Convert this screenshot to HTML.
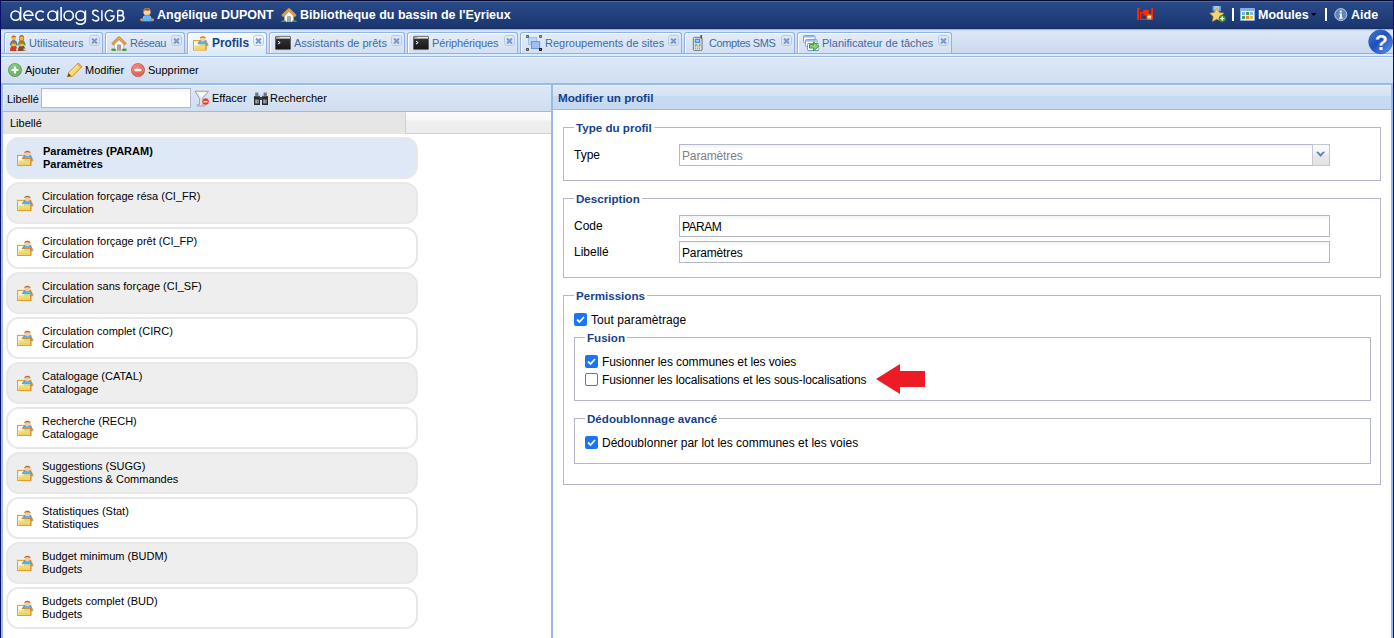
<!DOCTYPE html>
<html><head><meta charset="utf-8">
<style>
*{box-sizing:border-box}
html,body{margin:0;padding:0}
body{width:1394px;height:638px;overflow:hidden;position:relative;background:#fff;font-family:"Liberation Sans",sans-serif;font-size:11px;color:#000}
.a{position:absolute}
.t{position:absolute;white-space:nowrap;line-height:1}
/* header */
#hdr{left:0;top:0;width:1394px;height:29px;background:linear-gradient(#294b8a,#1b356e);border-top:1px solid #06082e}
#hdr .hl{left:0;top:0;width:1394px;height:1px;background:#4a6cac}
.ht{color:#fff;font-weight:bold;font-size:12.5px}
/* tab strip */
#strip{left:0;top:29px;width:1394px;height:24px;background:linear-gradient(#9ab9e6 0,#9ab9e6 1px,#c6d8f1 1px,#c6d8f1 2px,#dde7f5 2px,#cbd9ef 100%)}
.tab{position:absolute;top:32px;height:21px;border:1px solid #8db2e3;border-bottom:0;border-radius:3px 3px 0 0;background:linear-gradient(#e4ecf7,#d3e0f2);box-shadow:inset 1px 1px 0 #fff}
.tab.act{height:22px;z-index:2;background:linear-gradient(#fafcfe,#deeafa)}
.tab .tx{position:absolute;left:24px;top:5px;color:#416aa3;font-size:11px;white-space:nowrap;line-height:1}
.tab.act .tx{color:#15428b;font-weight:bold}
.tab .ic{position:absolute;left:5px;top:2px;width:16px;height:16px}
.cls{position:absolute;right:2px;top:2px;width:11px;height:11px;border:1px solid #b4caec;border-radius:3px}
.cls:before,.cls:after{content:"";position:absolute;left:1px;top:3.8px;width:7px;height:2px;background:#7b98cb;transform:rotate(45deg)}
.cls:after{transform:rotate(-45deg)}
/* toolbar */
.tb{background:linear-gradient(#dde8f6,#d0def1)}
.tbt{font-size:11px;color:#000}
/* fieldset */
.fs{position:absolute;border:1px solid #b5b8c8}
.lg{position:absolute;background:#fff;color:#15428b;font-weight:bold;font-size:11.6px;padding:0 2px;line-height:1;white-space:nowrap}
.lbl{position:absolute;font-size:12px;white-space:nowrap;line-height:1;color:#000}
.inp{position:absolute;border:1px solid #b5b8c8;background:linear-gradient(#f0f2f4 0,#fff 4px,#fff)}
.inp span{position:absolute;left:2px;top:5px;font-size:12px;line-height:1;white-space:nowrap}
.cb{position:absolute;width:13px;height:13px;border-radius:2px;background:#1775f6}
.cb svg{position:absolute;left:0;top:0}
.cbu{position:absolute;width:13px;height:13px;border-radius:2px;border:1px solid #767676;background:#fff}
/* list */
.row{position:absolute;left:6px;width:412px;height:42px;border:2px solid #e8e8e8;border-radius:13px}
.row .t1{position:absolute;left:34px;top:7px;font-size:11px;line-height:1;white-space:nowrap}
.row .t2{position:absolute;left:34px;top:20px;font-size:11px;line-height:1;white-space:nowrap}
.row svg.ri{position:absolute;left:9px;top:11px}
.row.sel{background:#dfe8f6}.row.sel .t1,.row.sel .t2{font-weight:bold;left:35px}
.row.g{background:#eeeeee}.row.w{background:#fff}
</style></head><body>

<!-- outer frame -->
<div class="a" id="hdr"><div class="a hl"></div></div>
<div class="a" style="left:0;top:28px;width:1394px;height:1px;background:#142c5c"></div>
<div class="a" style="left:0;top:0;width:1px;height:638px;background:#0b0d6b;z-index:50"></div>
<div class="a" style="left:1393px;top:0;width:1px;height:638px;background:#0b0d6b;z-index:50"></div>

<!-- logo -->
<svg class="a" style="left:0;top:0" width="130" height="29" viewBox="0 0 130 29">
  <g fill="none" stroke="#fff" stroke-width="1.6">
    <circle cx="15.6" cy="15.65" r="4.6"/><line x1="20.6" y1="7" x2="20.6" y2="21"/>
    <path d="M23.6 15.3H33A4.6 4.6 0 1 0 31.6 19"/>
    <path d="M43.7 12.4A4.6 4.6 0 1 0 43.7 18.9"/>
    <circle cx="52.5" cy="15.65" r="4.6"/><line x1="57.5" y1="10.4" x2="57.5" y2="21"/>
    <line x1="61.1" y1="7" x2="61.1" y2="21"/>
    <circle cx="68.7" cy="15.65" r="4.6"/>
    <circle cx="80.5" cy="15.65" r="4.6"/><path d="M85.4 10.4V19.8C85.4 25.2 78.2 25.2 76 22.3"/>
  </g>
  <g fill="none" stroke="#fff" stroke-width="1.45">
    <path d="M98.3 11.9C97.7 10.8 96.7 10.3 95.5 10.3C93.8 10.3 92.7 11.3 92.7 12.8C92.7 16.3 98.7 15 98.7 18.4C98.7 20 97.4 20.9 95.6 20.9C94.2 20.9 93 20.3 92.3 19.1"/>
    <path d="M101.9 10.2V21"/>
    <path d="M113 11.8A4.5 5.3 0 1 0 113.9 17.6V15.9H110.4"/>
    <path d="M117.7 10.4V20.9H121C122.9 20.9 123.9 19.8 123.9 18.1C123.9 16.5 122.9 15.5 121 15.5H117.7M117.7 10.4H120.6C122.3 10.4 123.2 11.4 123.2 12.9C123.2 14.4 122.3 15.5 120.6 15.5"/>
  </g>
</svg>

<!-- header user -->
<svg class="a" style="left:139px;top:6px" width="16" height="16" viewBox="0 0 16 16">
  <path d="M5 9.6L6.3 8.9H9.9L11.2 9.6L13 15.6H3.2z" fill="#5cb6fb" stroke="#1f5fd0" stroke-width=".7" stroke-linejoin="round"/>
  <path d="M5.2 10L3.8 13M11 10l1.4 3" stroke="#d8ecff" stroke-width=".7"/>
  <circle cx="2.6" cy="13.8" r="1.4" fill="#f29a30"/><circle cx="13.6" cy="13.8" r="1.4" fill="#f29a30"/>
  <circle cx="8" cy="5.8" r="3.7" fill="#f5d2aa"/>
  <path d="M4.1 6.8C3.6 .8 12.4 .8 11.9 6.8C11.5 5.5 11 4.6 10.3 4.3C9 5 7.2 4.6 6 4.2C5 4.6 4.5 5.5 4.1 6.8z" fill="#a0521c"/>
  <path d="M5.5 9.3H10.5" stroke="#c07a3a" stroke-width=".8"/>
</svg>
<div class="t ht" style="left:157px;top:9px">Angélique DUPONT</div>
<svg class="a" style="left:281px;top:6px" width="16" height="16" viewBox="0 0 16 16">
  <g transform="translate(0 0.6)"><path d="M3.4 8.6V15.4H12.6V8.6L8 4.4z" fill="#fbfbfb" stroke="#9a9a9a" stroke-width=".5"/>
  <rect x="6.3" y="9.8" width="3.4" height="5.6" fill="#7a7a7a"/><rect x="6.9" y="10.4" width="2.2" height="5" fill="#a6a6a6"/>
  <path d="M1.3 9.6L8 3.1l6.7 6.5" fill="none" stroke="#cf8e3e" stroke-width="3" stroke-linejoin="round"/>
  <path d="M1.6 9.3L8 3.1l6.4 6.2" fill="none" stroke="#eab96e" stroke-width="1"/>
  <ellipse cx="2.6" cy="14.9" rx="2.5" ry="1.2" fill="#3da32c"/><ellipse cx="13.4" cy="14.9" rx="2.5" ry="1.2" fill="#3da32c"/></g>
</svg>
<div class="t ht" style="left:300px;top:9px">Bibliothèque du bassin de l'Eyrieux</div>

<!-- header right -->
<svg class="a" style="left:1130px;top:0" width="30" height="29" viewBox="0 0 30 29">
  <rect x="7" y="8" width="2" height="12" fill="#f22a08"/><rect x="7.5" y="8" width="2.5" height="1.2" fill="#f22a08"/>
  <rect x="21.2" y="8" width="1.8" height="12" fill="#f22a08"/>
  <rect x="10" y="18.8" width="12" height="1.2" fill="#f22a08"/>
  <rect x="10" y="12" width="1.4" height="8" fill="#f22a08"/><rect x="10" y="12" width="4" height="1.3" fill="#f22a08"/>
  <rect x="13.2" y="9.8" width="5.6" height="5.6" fill="#ff2a00"/>
  <circle cx="19.3" cy="17" r="3" fill="#f26a10"/><rect x="17.6" y="15.8" width="3.4" height="1" fill="#fff"/><rect x="17.6" y="17.4" width="3.4" height="1" fill="#fff"/>
</svg>
<svg class="a" style="left:1209px;top:5px" width="18" height="18" viewBox="0 0 18 18">
  <path d="M3.5 1h8.5v4.5l-4.2 3l-4.3-3z" fill="#6fa0d8"/><path d="M5.2 1h5v3.5l-2.5 1.8l-2.5-1.8z" fill="#a9c8ec"/>
  <path d="M7.8 3.2l2.2 4.3 4.8.7-3.5 3.4.8 4.8-4.3-2.3-4.3 2.3.8-4.8L.8 8.2l4.8-.7z" fill="#f4d670" stroke="#d99a20" stroke-width=".7"/>
  <circle cx="13.3" cy="13.6" r="3.4" fill="#3f9a34" stroke="#2d7a26" stroke-width=".5"/>
  <path d="M13.3 11.6v4M11.3 13.6h4" stroke="#fff" stroke-width="1.4"/>
</svg>
<div class="a" style="left:1232px;top:8px;width:2px;height:13px;background:#fff"></div>
<svg class="a" style="left:1240px;top:8px" width="15" height="13" viewBox="0 0 15 13">
  <rect x="0" y="0" width="15" height="13" rx="1" fill="#8aaee0"/>
  <rect x="1" y="3" width="13" height="9" fill="#fff"/>
  <rect x="2" y="4" width="3" height="3" fill="#6fb0f0"/><rect x="6" y="4" width="3" height="3" fill="#4e9a4a"/><rect x="10" y="4" width="3" height="3" fill="#7ab8f0"/>
  <rect x="2" y="8" width="3" height="3" fill="#4e9a4a"/><rect x="6" y="8" width="3" height="3" fill="#f58030"/><rect x="10" y="8" width="3" height="3" fill="#e6c040"/>
</svg>
<div class="t ht" style="left:1258px;top:9px">Modules</div>
<svg class="a" style="left:1311px;top:13px" width="6" height="4"><path d="M0 0h5.5L2.75 3z" fill="#000"/></svg>
<div class="a" style="left:1325px;top:8px;width:2px;height:13px;background:#fff"></div>
<svg class="a" style="left:1334px;top:8px" width="14" height="14" viewBox="0 0 14 14">
  <circle cx="6.8" cy="6.6" r="6" fill="#5f86bf" stroke="#b9cde8" stroke-width="1"/>
  <circle cx="6.8" cy="3.6" r="1.1" fill="#fff"/><path d="M5.3 5.5h2.5v4.2h1v1.1H5v-1.1h1V6.6h-.7z" fill="#fff"/>
</svg>
<div class="t ht" style="left:1351px;top:9px">Aide</div>

<!-- tab strip -->
<div class="a" id="strip"></div>
<div class="a" style="left:1px;top:53px;width:1392px;height:1px;background:#8db2e3"></div>
<div class="a" style="left:1px;top:54px;width:1392px;height:2px;background:#deebfb"></div>
<div class="a" style="left:1px;top:56px;width:1392px;height:1px;background:#99bbe8"></div>
<div class="a" style="left:1px;top:57px;width:1392px;height:1px;background:#eef3fa;z-index:1"></div>

<div class="tab" style="left:4px;width:99px"><svg class="ic" viewBox="0 0 16 16">
  <path d="M0 10.5c0-4 2-5.5 3.7-5.5s3.8 1.5 3.8 5.5z" fill="#3f7fad"/>
  <path d="M8 10.5c0-4 2-5.5 3.6-5.5s3.9 1.5 3.9 5.5z" fill="#4f9a43"/>
  <circle cx="3.7" cy="2.9" r="2.3" fill="#f7b13c"/><path d="M1.4 2.6c0-2.6 4.6-2.6 4.6 0c-.8-.7-3.8-.7-4.6 0z" fill="#b9551a"/>
  <path d="M9.2 5.5c-.6-4.5 1-5.5 2.4-5.5s3 1 2.4 5.5z" fill="#c3621e"/><circle cx="11.6" cy="3.4" r="2" fill="#f7b13c"/>
  <path d="M0 16c0-4.5 2-5.6 3.7-5.6s3.8 1.1 3.8 5.6z" fill="#d23c2a"/>
  <path d="M8 16c0-4.5 2-5.6 3.6-5.6s3.9 1.1 3.9 5.6z" fill="#7d4c2b"/>
  <circle cx="3.7" cy="9.3" r="2.2" fill="#f9b842"/><path d="M1.5 9c0-2.4 4.4-2.4 4.4 0c-.8-.6-3.6-.6-4.4 0z" fill="#b9551a"/>
  <circle cx="11.6" cy="9.3" r="2.2" fill="#f9b842"/><path d="M9.4 9c0-2.4 4.4-2.4 4.4 0c-.8-.6-3.6-.6-4.4 0z" fill="#9a4a1a"/>
  <rect x="6" y="13.5" width="2" height="2" fill="#f4d0c8"/><rect x="13.5" y="13.5" width="2" height="2" fill="#e8d8c8"/>
</svg><div class="tx">Utilisateurs</div><div class="cls"></div></div>

<div class="tab" style="left:105px;width:80px"><svg class="ic" viewBox="0 0 16 16">
  <g transform="translate(0 -0.2)"><path d="M3.4 8.6V15.4H12.6V8.6L8 4.4z" fill="#fbfbfb" stroke="#9a9a9a" stroke-width=".5"/>
  <rect x="6.3" y="9.8" width="3.4" height="5.6" fill="#7a7a7a"/><rect x="6.9" y="10.4" width="2.2" height="5" fill="#a6a6a6"/>
  <path d="M1.3 9.6L8 3.1l6.7 6.5" fill="none" stroke="#cf8e3e" stroke-width="3" stroke-linejoin="round"/>
  <path d="M1.6 9.3L8 3.1l6.4 6.2" fill="none" stroke="#eab96e" stroke-width="1"/>
  <ellipse cx="2.6" cy="14.9" rx="2.5" ry="1.2" fill="#3da32c"/><ellipse cx="13.4" cy="14.9" rx="2.5" ry="1.2" fill="#3da32c"/></g>
</svg><div class="tx" style="letter-spacing:-0.3px">Réseau</div><div class="cls"></div></div>

<div class="tab act" style="left:187px;width:80px"><svg class="ic" viewBox="0 0 17 16" width="17" height="16"><use href="#pic"/></svg><div class="tx" style="font-size:11.9px;top:5px">Profils</div><div class="cls"></div></div>

<div class="tab" style="left:269px;width:136px"><svg class="ic" viewBox="0 0 16 16">
  <defs><linearGradient id="tg" x1="0" y1="0" x2="0" y2="1"><stop offset="0" stop-color="#3a3a3a"/><stop offset="1" stop-color="#151515"/></linearGradient></defs>
  <rect x="0.3" y="1.2" width="15.4" height="13.4" rx="1.2" fill="url(#tg)" stroke="#6a6a6a" stroke-width=".5"/>
  <rect x="1" y="1.8" width="14" height="1.8" fill="#e6e6e6"/>
  <rect x="1.3" y="2.1" width="1" height="1" fill="#e03020"/><rect x="2.5" y="2.1" width="1" height="1" fill="#40b040"/><rect x="3.7" y="2.1" width="1" height="1" fill="#e0b020"/>
  <path d="M3 6.2l2.2 1.4L3 9" fill="none" stroke="#fff" stroke-width="1"/>
</svg><div class="tx">Assistants de prêts</div><div class="cls"></div></div>

<div class="tab" style="left:407px;width:111px"><svg class="ic" viewBox="0 0 16 16">
  <defs><linearGradient id="tg" x1="0" y1="0" x2="0" y2="1"><stop offset="0" stop-color="#3a3a3a"/><stop offset="1" stop-color="#151515"/></linearGradient></defs>
  <rect x="0.3" y="1.2" width="15.4" height="13.4" rx="1.2" fill="url(#tg)" stroke="#6a6a6a" stroke-width=".5"/>
  <rect x="1" y="1.8" width="14" height="1.8" fill="#e6e6e6"/>
  <rect x="1.3" y="2.1" width="1" height="1" fill="#e03020"/><rect x="2.5" y="2.1" width="1" height="1" fill="#40b040"/><rect x="3.7" y="2.1" width="1" height="1" fill="#e0b020"/>
  <path d="M3 6.2l2.2 1.4L3 9" fill="none" stroke="#fff" stroke-width="1"/>
</svg><div class="tx" style="letter-spacing:-0.12px">Périphériques</div><div class="cls"></div></div>

<div class="tab" style="left:520px;width:162px"><svg class="ic" viewBox="0 0 16 16">
  <rect x="2.6" y="2.5" width="8" height="7" fill="#c0d6f6" stroke="#93b6ee" stroke-width=".8"/>
  <rect x="5.5" y="6.6" width="8.2" height="7" fill="#a2bff0" stroke="#5b8ddf" stroke-width=".9"/>
  <rect x="0" y="0" width="3" height="3" rx=".9" fill="#5a5a5a"/><rect x="13" y="0" width="3" height="3" rx=".9" fill="#5a5a5a"/>
  <rect x="0" y="13" width="3" height="3" rx=".9" fill="#4a4a4a"/><rect x="13" y="13" width="3" height="3" rx=".9" fill="#000"/>
  <rect x="1.1" y="1.1" width=".8" height=".8" fill="#ddd"/><rect x="14.1" y="1.1" width=".8" height=".8" fill="#ddd"/>
  <rect x="1.1" y="14.1" width=".8" height=".8" fill="#ddd"/><rect x="14.1" y="14.1" width=".8" height=".8" fill="#ddd"/>
</svg><div class="tx">Regroupements de sites</div><div class="cls"></div></div>

<div class="tab" style="left:684px;width:111px"><svg class="ic" viewBox="0 0 16 16">
  <rect x="3.3" y="2.3" width="8.8" height="13.3" rx="1.3" fill="#dcdcdc" stroke="#6a6a6a" stroke-width=".9"/>
  <rect x="10.4" y="0" width="1.7" height="3.5" fill="#555"/>
  <rect x="4.9" y="3.8" width="5.3" height="4.3" rx=".6" fill="#2a98f4"/><rect x="6" y="5.2" width="3" height="1.4" fill="#bfe2ff"/>
  <rect x="4.9" y="9.4" width="2.4" height="1.2" fill="#4ab04a"/><rect x="9" y="9.3" width="1.3" height="1.3" fill="#e03a3a"/>
  <rect x="5" y="11.3" width="1" height="1" fill="#999"/><rect x="7" y="11.3" width="1" height="1" fill="#999"/><rect x="9" y="11.3" width="1" height="1" fill="#999"/>
  <rect x="5" y="13.1" width="1" height="1" fill="#999"/><rect x="7" y="13.1" width="1" height="1" fill="#999"/><rect x="9" y="13.1" width="1" height="1" fill="#999"/>
</svg><div class="tx" style="letter-spacing:-0.4px">Comptes SMS</div><div class="cls"></div></div>

<div class="tab" style="left:797px;width:155px"><svg class="ic" viewBox="0 0 16 16">
  <rect x="0.5" y="0.5" width="11.5" height="7" rx=".8" fill="#fff" stroke="#7ea2d8"/><rect x="1" y="1" width="10.5" height="1.6" fill="#9dbbe8"/>
  <rect x="2.5" y="4.5" width="11.5" height="7" rx=".8" fill="#fff" stroke="#7ea2d8"/><rect x="3" y="5" width="10.5" height="1.6" fill="#9dbbe8"/>
  <rect x="4.5" y="8.5" width="11.3" height="7" rx=".8" fill="#fff" stroke="#6f96d2"/>
  <path d="M6.5 9.6h4.2V6.8l5 4.5-5 4.5v-2.8H6.5z" fill="#8fcf70" stroke="#2f8f1f" stroke-width=".9" stroke-linejoin="round"/>
</svg><div class="tx">Planificateur de tâches</div><div class="cls"></div></div>

<!-- help button -->
<svg class="a" style="left:1368px;top:29px;z-index:3" width="26" height="26" viewBox="0 0 26 26">
  <defs><linearGradient id="hg" x1="0" y1="0" x2="1" y2="1"><stop offset="0" stop-color="#3f78dc"/><stop offset=".45" stop-color="#1f50be"/><stop offset="1" stop-color="#5c9cf0"/></linearGradient></defs>
  <circle cx="12.6" cy="12.8" r="11.9" fill="url(#hg)" stroke="#2a55b0" stroke-width=".7"/>
  <text x="13.2" y="20.8" text-anchor="middle" fill="#f4f6fa" font-family="Liberation Sans" font-weight="bold" font-size="21.5">?</text>
</svg>
<div class="a" style="left:1391px;top:57px;width:2px;height:26px;background:#b4cdef"></div>

<!-- main toolbar -->
<div class="a tb" style="left:1px;top:57px;width:1392px;height:26px"></div>
<div class="a" style="left:1px;top:83px;width:1392px;height:2px;background:#99bbe8"></div>
<svg class="a" style="left:8px;top:63px" width="14" height="14" viewBox="0 0 14 14">
  <defs><radialGradient id="gg" cx="45%" cy="40%" r="60%"><stop offset="0" stop-color="#9bd88f"/><stop offset="1" stop-color="#4d9f47"/></radialGradient>
  <radialGradient id="rg" cx="45%" cy="40%" r="60%"><stop offset="0" stop-color="#f59a86"/><stop offset="1" stop-color="#d9443a"/></radialGradient></defs>
  <circle cx="7" cy="7" r="6.6" fill="url(#gg)" stroke="#4a8f44" stroke-width=".6"/>
  <circle cx="7" cy="7" r="5.4" fill="none" stroke="#c8ecc0" stroke-width=".5" opacity=".8"/>
  <path d="M7 3.6v6.8M3.6 7h6.8" stroke="#fff" stroke-width="2.2"/>
</svg>
<div class="t tbt" style="left:25px;top:65px">Ajouter</div>
<svg class="a" style="left:66px;top:62px" width="17" height="16" viewBox="0 0 17 16">
  <path d="M1.5 14.8L2.8 10.6 12.2 1.2 15.8 4.8 6.4 14.2z" fill="#f6dc64" stroke="#c47d1c" stroke-width=".9" stroke-linejoin="round"/>
  <path d="M3.6 11.2L12.4 2.4" stroke="#fff3b0" stroke-width="1"/>
  <path d="M11.4 2l1-1 3.6 3.6-1 1z" fill="#f6c0a0" stroke="#c47d1c" stroke-width=".7"/>
  <path d="M1.5 14.8L2.6 11.2 5 13.6z" fill="#6a3a10"/>
</svg>
<div class="t tbt" style="left:85px;top:65px">Modifier</div>
<svg class="a" style="left:131px;top:63px" width="14" height="14" viewBox="0 0 14 14">
  <circle cx="7" cy="7" r="6.6" fill="url(#rg)" stroke="#c9493e" stroke-width=".6"/>
  <circle cx="7" cy="7" r="5.4" fill="none" stroke="#fbd0c8" stroke-width=".5" opacity=".8"/>
  <rect x="3.5" y="5.9" width="7" height="2.3" fill="#fff"/>
</svg>
<div class="t tbt" style="left:148px;top:65px">Supprimer</div>

<!-- left panel -->
<div class="a" style="left:1px;top:85px;width:2px;height:553px;background:#99bbe8"></div>
<div class="a tb" style="left:3px;top:85px;width:548px;height:26px"></div>
<div class="a" style="left:3px;top:111px;width:548px;height:1px;background:#99bbe8"></div>
<div class="a" style="left:3px;top:85px;width:548px;height:1px;background:#eef3fa"></div>
<div class="a" style="left:3px;top:85px;width:1px;height:26px;background:#e6edf7"></div>
<div class="a" style="left:3px;top:112px;width:548px;height:1px;background:#f4f4f4"></div>
<div class="t tbt" style="left:7px;top:94px">Libellé</div>
<div class="inp" style="left:41px;top:88px;width:150px;height:20px"></div>
<svg class="a" style="left:194px;top:90px" width="16" height="17" viewBox="0 0 16 17">
  <path d="M1 1.2h13.5L8.4 8.6v6.2h2.2v1.2H3.2v-1.2h2.4V8.6z" fill="#e8e8e8" stroke="#9a9a9a" stroke-width=".9" stroke-linejoin="round"/>
  <path d="M3.2 2.4h9.2L7.8 7.6z" fill="#fbfbfb"/>
  <circle cx="11.6" cy="11.6" r="3.6" fill="#e0392c" stroke="#f8f8f8" stroke-width=".5"/>
  <rect x="9.6" y="10.9" width="4" height="1.5" fill="#fff"/>
</svg>
<div class="t tbt" style="left:212px;top:93px">Effacer</div>
<svg class="a" style="left:254px;top:92px" width="14" height="13" viewBox="0 0 14 13">
  <rect x="0" y="4" width="6" height="9" rx=".5" fill="#2a2a2a"/><rect x="8" y="4" width="6" height="9" rx=".5" fill="#2a2a2a"/>
  <rect x="5" y="5" width="4" height="3" fill="#3a3a3a"/>
  <rect x="1.2" y="0.5" width="3.2" height="4" fill="#6a7a8a"/><rect x="9.6" y="0.5" width="3.2" height="4" fill="#6a7a8a"/>
  <rect x="1.3" y="7.5" width="1.6" height="4" fill="#aab4be"/><rect x="3.2" y="7.5" width="1.6" height="4" fill="#8a949e"/>
  <rect x="9.3" y="7.5" width="1.6" height="4" fill="#aab4be"/><rect x="11.2" y="7.5" width="1.6" height="4" fill="#8a949e"/>
  <path d="M4.5 4.5L6 2.5M9.5 4.5L8 2.5" stroke="#8aa0c0" stroke-width=".8"/>
</svg>
<div class="t tbt" style="left:270px;top:93px">Rechercher</div>

<!-- grid header -->
<div class="a" style="left:3px;top:112px;width:403px;height:22px;background:#e6e6e6"></div>
<div class="a" style="left:405px;top:113px;width:1px;height:21px;background:#d0d0d0"></div>
<div class="a" style="left:406px;top:112px;width:145px;height:22px;background:linear-gradient(#fafafa 0,#f8f8f8 38%,#eeeff1 39%,#ececee 100%)"></div>
<div class="a" style="left:406px;top:133px;width:145px;height:1px;background:#d0d0d0"></div>
<div class="t tbt" style="left:10px;top:118px">Libellé</div>

<!-- list rows -->
<div id="rows">
<svg width="0" height="0" style="position:absolute"><defs><linearGradient id="fy" x1="0" y1="0" x2="0" y2="1"><stop offset="0" stop-color="#fbeaa0"/><stop offset="1" stop-color="#f0cc48"/></linearGradient>
<g id="pic"><rect x="0.6" y="5.4" width="13.2" height="10.1" fill="#fffdf2" stroke="#e0a02e" stroke-width="1.1"/><path d="M5 8.9Q6.4 5.1 10.4 5.1Q14.6 5.1 15.9 10.6L14.4 10.9Q13.9 9.4 13.4 8.6H6.2z" fill="#5ab4f4" stroke="#2f6fc8" stroke-width=".6"/><circle cx="15.3" cy="10.1" r="1.1" fill="#f09a3a"/><circle cx="10.4" cy="3.2" r="3" fill="#f6cba2"/><path d="M7.3 3.3C6.9 0.2 13.9 0.2 13.5 3.3C12.5 1.9 8.3 1.9 7.3 3.3z" fill="#a8602c"/><rect x="1.6" y="9" width="11.4" height="5.9" fill="url(#fy)"/><rect x="7" y="9" width="6" height="2.2" fill="#c2dca8"/><rect x="1.6" y="9" width="3.6" height="1.2" fill="#fff"/><path d="M5.2 8.5H13.8V15.5" fill="none" stroke="#e08a22" stroke-width="1.1"/></g></defs></svg>
<div class="row sel" style="top:137px"><svg class="ri" width="17" height="16"><use href="#pic"/></svg><div class="t1">Paramètres (PARAM)</div><div class="t2">Paramètres</div></div>
<div class="row g" style="top:182px"><svg class="ri" width="17" height="16"><use href="#pic"/></svg><div class="t1">Circulation forçage résa (CI_FR)</div><div class="t2">Circulation</div></div>
<div class="row w" style="top:227px"><svg class="ri" width="17" height="16"><use href="#pic"/></svg><div class="t1">Circulation forçage prêt (CI_FP)</div><div class="t2">Circulation</div></div>
<div class="row g" style="top:272px"><svg class="ri" width="17" height="16"><use href="#pic"/></svg><div class="t1">Circulation sans forçage (CI_SF)</div><div class="t2">Circulation</div></div>
<div class="row w" style="top:317px"><svg class="ri" width="17" height="16"><use href="#pic"/></svg><div class="t1">Circulation complet (CIRC)</div><div class="t2">Circulation</div></div>
<div class="row g" style="top:362px"><svg class="ri" width="17" height="16"><use href="#pic"/></svg><div class="t1">Catalogage (CATAL)</div><div class="t2">Catalogage</div></div>
<div class="row w" style="top:407px"><svg class="ri" width="17" height="16"><use href="#pic"/></svg><div class="t1">Recherche (RECH)</div><div class="t2">Catalogage</div></div>
<div class="row g" style="top:452px"><svg class="ri" width="17" height="16"><use href="#pic"/></svg><div class="t1">Suggestions (SUGG)</div><div class="t2">Suggestions &amp; Commandes</div></div>
<div class="row w" style="top:497px"><svg class="ri" width="17" height="16"><use href="#pic"/></svg><div class="t1">Statistiques (Stat)</div><div class="t2">Statistiques</div></div>
<div class="row g" style="top:542px"><svg class="ri" width="17" height="16"><use href="#pic"/></svg><div class="t1">Budget minimum (BUDM)</div><div class="t2">Budgets</div></div>
<div class="row w" style="top:587px"><svg class="ri" width="17" height="16"><use href="#pic"/></svg><div class="t1">Budgets complet (BUD)</div><div class="t2">Budgets</div></div>
</div>

<!-- divider -->
<div class="a" style="left:551px;top:85px;width:2px;height:553px;background:#99bbe8"></div>

<!-- right panel -->
<div class="a" style="left:553px;top:85px;width:838px;height:24px;background:linear-gradient(#dfe9f6 0,#d6e3f4 45%,#c7daf3 46%,#c5d9f3 100%)"></div>
<div class="a" style="left:553px;top:109px;width:838px;height:1px;background:#99bbe8"></div>
<div class="a" style="left:1391px;top:85px;width:2px;height:553px;background:#99bbe8"></div>
<div class="a" style="left:553px;top:85px;width:838px;height:1px;background:#e9f0f9"></div>
<div class="t" style="left:558px;top:92px;color:#15428b;font-weight:bold;font-size:11.7px">Modifier un profil</div>

<!-- fieldset 1 -->
<div class="fs" style="left:563px;top:127px;width:818px;height:54px"></div>
<div class="lg" style="left:574px;top:122px">Type du profil</div>
<div class="lbl" style="left:574px;top:149px">Type</div>
<div class="inp" style="left:679px;top:144px;width:651px;height:22px"><span style="color:#808080;letter-spacing:-0.15px">Paramètres</span></div>
<div class="a" style="left:1312px;top:144px;width:18px;height:22px;border:1px solid #c3c6d4;border-radius:0 2px 0 0;background:linear-gradient(#fbfbfb 0,#f2f2f2 45%,#e8e8e8 50%,#e3e3e3 100%)"></div>
<svg class="a" style="left:1315px;top:151px" width="11" height="7" viewBox="0 0 11 7"><path d="M.8 .8h2.7l2.1 2.2 2.1-2.2h2.6L5.6 6z" fill="#6b83b6"/></svg>

<!-- fieldset 2 -->
<div class="fs" style="left:563px;top:198px;width:818px;height:80px"></div>
<div class="lg" style="left:574px;top:193px">Description</div>
<div class="lbl" style="left:574px;top:220px">Code</div>
<div class="inp" style="left:679px;top:215px;width:651px;height:22px"><span style="letter-spacing:-0.5px">PARAM</span></div>
<div class="lbl" style="left:574px;top:246px">Libellé</div>
<div class="inp" style="left:679px;top:241px;width:651px;height:22px"><span style="letter-spacing:-0.15px">Paramètres</span></div>

<!-- fieldset 3 -->
<div class="fs" style="left:563px;top:295px;width:818px;height:190px"></div>
<div class="lg" style="left:574px;top:290px">Permissions</div>
<div class="cb" style="left:574px;top:313px"><svg width="13" height="13"><path d="M3 6.5l2.5 2.5 4.5-5" fill="none" stroke="#fff" stroke-width="1.8"/></svg></div>
<div class="lbl" style="left:591px;top:314px;letter-spacing:0.07px">Tout paramètrage</div>

<div class="fs" style="left:574px;top:337px;width:797px;height:64px"></div>
<div class="lg" style="left:585px;top:332px">Fusion</div>
<div class="cb" style="left:585px;top:355px"><svg width="13" height="13"><path d="M3 6.5l2.5 2.5 4.5-5" fill="none" stroke="#fff" stroke-width="1.8"/></svg></div>
<div class="lbl" style="left:602px;top:356px;letter-spacing:-0.09px">Fusionner les communes et les voies</div>
<div class="cbu" style="left:585px;top:373px"></div>
<div class="lbl" style="left:602px;top:374px;letter-spacing:-0.12px">Fusionner les localisations et les sous-localisations</div>
<svg class="a" style="left:870px;top:360px" width="60" height="40"><path d="M6 19L30 4v7h25v16H30v7z" fill="#ed1c24"/></svg>

<div class="fs" style="left:574px;top:418px;width:797px;height:46px"></div>
<div class="lg" style="left:585px;top:413px">Dédoublonnage avancé</div>
<div class="cb" style="left:585px;top:436px"><svg width="13" height="13"><path d="M3 6.5l2.5 2.5 4.5-5" fill="none" stroke="#fff" stroke-width="1.8"/></svg></div>
<div class="lbl" style="left:602px;top:437px">Dédoublonner par lot les communes et les voies</div>

</body></html>
